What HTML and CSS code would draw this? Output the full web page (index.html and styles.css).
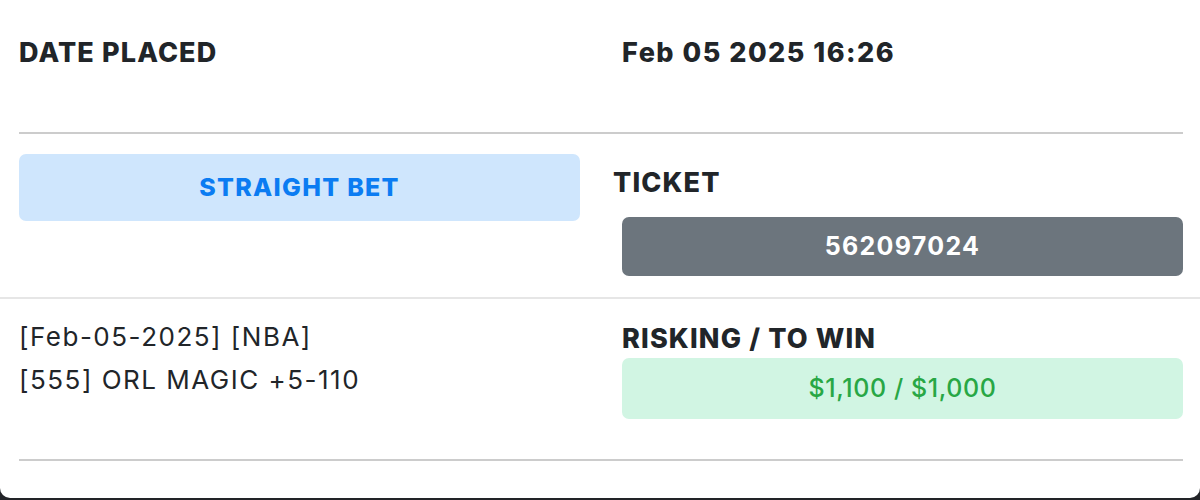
FILE: index.html
```html
<!DOCTYPE html>
<html>
<head>
<meta charset="utf-8">
<link rel="stylesheet" href="styles.css">
</head>
<body>
<div class="card">
  <div class="row row-date">
    <div class="label">DATE PLACED</div>
    <div class="label value">Feb 05 2025 16:26</div>
  </div>
  <div class="rule"></div>
  <div class="row row-ticket">
    <div class="col">
      <div class="pill pill-type">STRAIGHT BET</div>
    </div>
    <div class="col">
      <div class="label label-ticket">TICKET</div>
      <div class="pill pill-ticket">562097024</div>
    </div>
  </div>
  <div class="row row-bet">
    <div class="col desc">
      <div>[Feb-05-2025] [NBA]</div>
      <div>[555] ORL MAGIC +5-110</div>
    </div>
    <div class="col">
      <div class="label label-risk">RISKING / TO WIN</div>
      <div class="pill pill-amount">$1,100 / $1,000</div>
    </div>
  </div>
  <div class="rule"></div>
</div>
</body>
</html>
```
FILE: styles.css
```css
html, body {
  margin: 0;
  padding: 0;
}
body {
  background: #222428;
  width: 1200px;
  height: 500px;
  overflow: hidden;
  font-family: Inter, "Noto Sans", sans-serif;
  color: #212529;
}
.card {
  background: #ffffff;
  height: 498px;
  border-radius: 0 0 10px 10px;
  overflow: hidden;
}
.row {
  display: grid;
  grid-template-columns: 561px 561px;
  column-gap: 42px;
  padding: 0 17px 0 19px;
}
.label {
  font-weight: 800;
  font-size: 27px;
  line-height: 32px;
  letter-spacing: 1.15px;
}
.row-date {
  padding-top: 37px;
  height: 95px;
}
.value {
  letter-spacing: 1.5px;
}
.rule {
  height: 2px;
  background: #cccccc;
  margin: 0 17px 0 19px;
}
.row-ticket {
  padding-top: 20px;
  padding-bottom: 21px;
  border-bottom: 2px solid #e6e6e6;
}
.pill {
  border-radius: 7px;
  text-align: center;
}
.pill-type {
  height: 67px;
  line-height: 67px;
  background: #cfe6fd;
  color: #0b7cf2;
  font-size: 25px;
  font-weight: 800;
  letter-spacing: 1.3px;
}
.label-ticket {
  margin-left: -9px;
  margin-top: 13px;
  margin-bottom: 18px;
}
.pill-ticket {
  height: 59px;
  line-height: 59px;
  background: #6c757d;
  color: #ffffff;
  font-size: 25px;
  font-weight: 700;
  letter-spacing: 1.3px;
}
.row-bet {
  padding-top: 18px;
  height: 142px;
}
.desc {
  font-size: 26px;
  line-height: 43px;
  letter-spacing: 1.5px;
  margin-top: -2px;
}
.label-risk {
  margin-top: 6px;
  margin-bottom: 3px;
}
.pill-amount {
  height: 61px;
  line-height: 61px;
  background: #d1f5e3;
  color: #28a745;
  font-size: 25px;
  font-weight: 500;
  letter-spacing: 0.6px;
}
```
